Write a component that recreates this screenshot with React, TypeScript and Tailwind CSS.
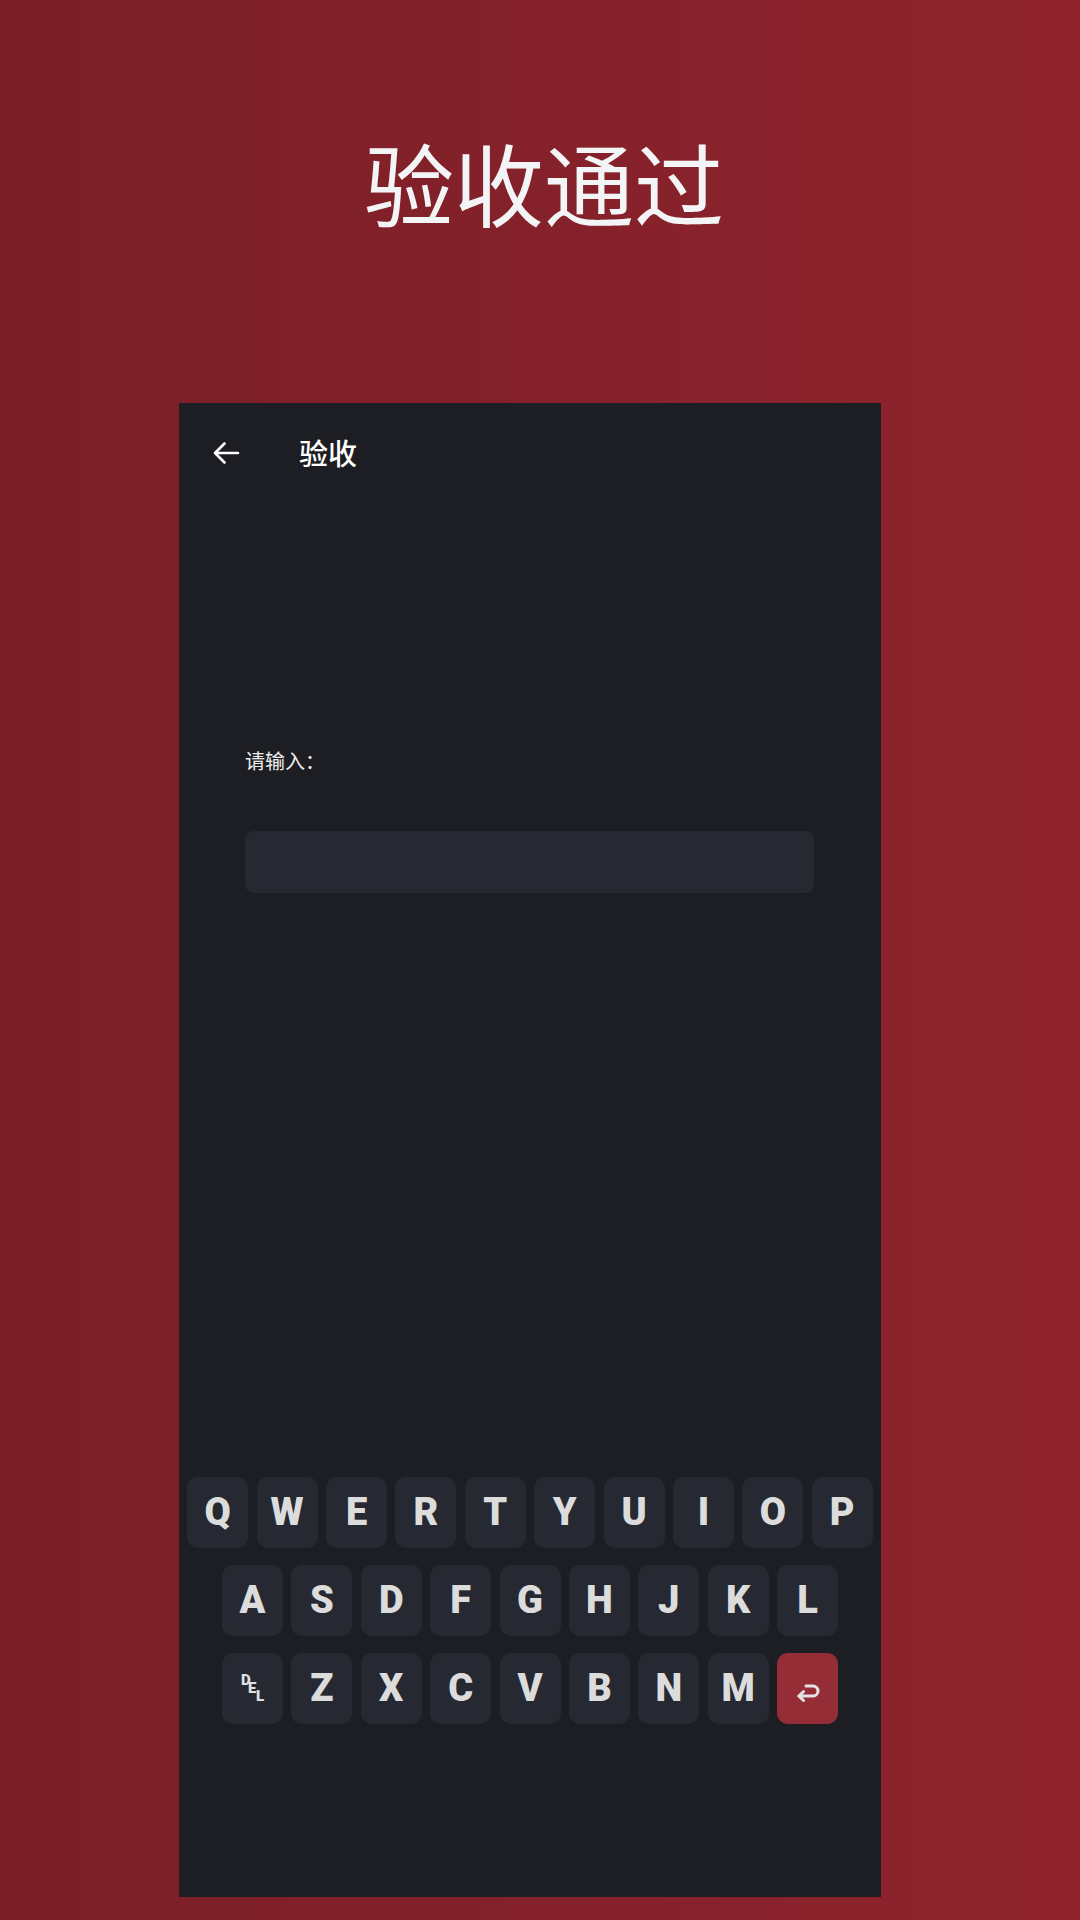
import React from 'react'

const rows = [
  ['Q', 'W', 'E', 'R', 'T', 'Y', 'U', 'I', 'O', 'P'],
  ['A', 'S', 'D', 'F', 'G', 'H', 'J', 'K', 'L'],
  ['DEL', 'Z', 'X', 'C', 'V', 'B', 'N', 'M', 'ENTER'],
]

function Key({ label }: { label: string }) {
  if (label === 'DEL') {
    return (
      <div className="w-[61px] h-[71px] rounded-[11px] bg-[#262832] relative text-[#e0e0e0] font-black text-[15px] leading-none font-['Roboto',sans-serif]">
        <span className="absolute left-[19px] top-[20px]">D</span>
        <span className="absolute left-[26px] top-[28px]">E</span>
        <span className="absolute left-[34px] top-[36px]">L</span>
      </div>
    )
  }
  if (label === 'ENTER') {
    return (
      <div className="w-[61px] h-[71px] rounded-[11px] bg-[#952d36] flex items-center justify-center">
        <svg width="26" height="20" viewBox="0 0 26 20" fill="none" className="mt-[6px]">
          <path d="M11 4 H18 a5 5 0 0 1 0 10 H4" stroke="#e3e3e3" strokeWidth="3" strokeLinecap="round" />
          <path d="M8.5 9.5 L4 14 L8.5 18.5" stroke="#e3e3e3" strokeWidth="3" strokeLinecap="round" strokeLinejoin="round" />
        </svg>
      </div>
    )
  }
  return (
    <div className="w-[61px] h-[71px] rounded-[11px] bg-[#262832] flex items-center justify-center text-[38px] font-black text-[#dcdcdc] font-['Roboto',sans-serif]">
      {label}
    </div>
  )
}

export default function App() {
  return (
    <div className="w-[1080px] h-[1920px] bg-gradient-to-r from-[#7a1f27] to-[#8f232d] flex flex-col overflow-hidden font-['Noto_Sans_CJK_SC',sans-serif]">
      <div className="h-[403px] flex justify-center pt-[136px]">
        <h1 className="text-[90px] leading-none text-[#f3f4f6] font-normal ml-[8px]">验收通过</h1>
      </div>

      <div className="ml-[179px] w-[702px] h-[1494px] bg-[#1d1e23] flex flex-col">
        {/* header */}
        <div className="h-[100px] flex items-center pl-[33px]">
          <svg width="28" height="24" viewBox="0 0 28 24" fill="none">
            <path d="M26 12 H3 M12.5 2.5 L3 12 L12.5 21.5" stroke="#ffffff" strokeWidth="2.6" strokeLinecap="round" strokeLinejoin="round" />
          </svg>
          <span className="ml-[59px] text-[29px] font-medium text-white">验收</span>
        </div>

        <div className="mt-[248px] pl-[66px] text-[20px] text-[#eeeeee] leading-none">请输入：</div>

        <div className="mt-[60px] ml-[66px] w-[569px] h-[62px] rounded-[9px] bg-[#262832]" />

        {/* keyboard */}
        <div className="mt-[584px] flex flex-col items-center gap-[17px]">
          {rows.map((row, i) => (
            <div key={i} className="flex gap-[8.4px]">
              {row.map((k) => (
                <Key key={k} label={k} />
              ))}
            </div>
          ))}
        </div>
      </div>
    </div>
  )
}
